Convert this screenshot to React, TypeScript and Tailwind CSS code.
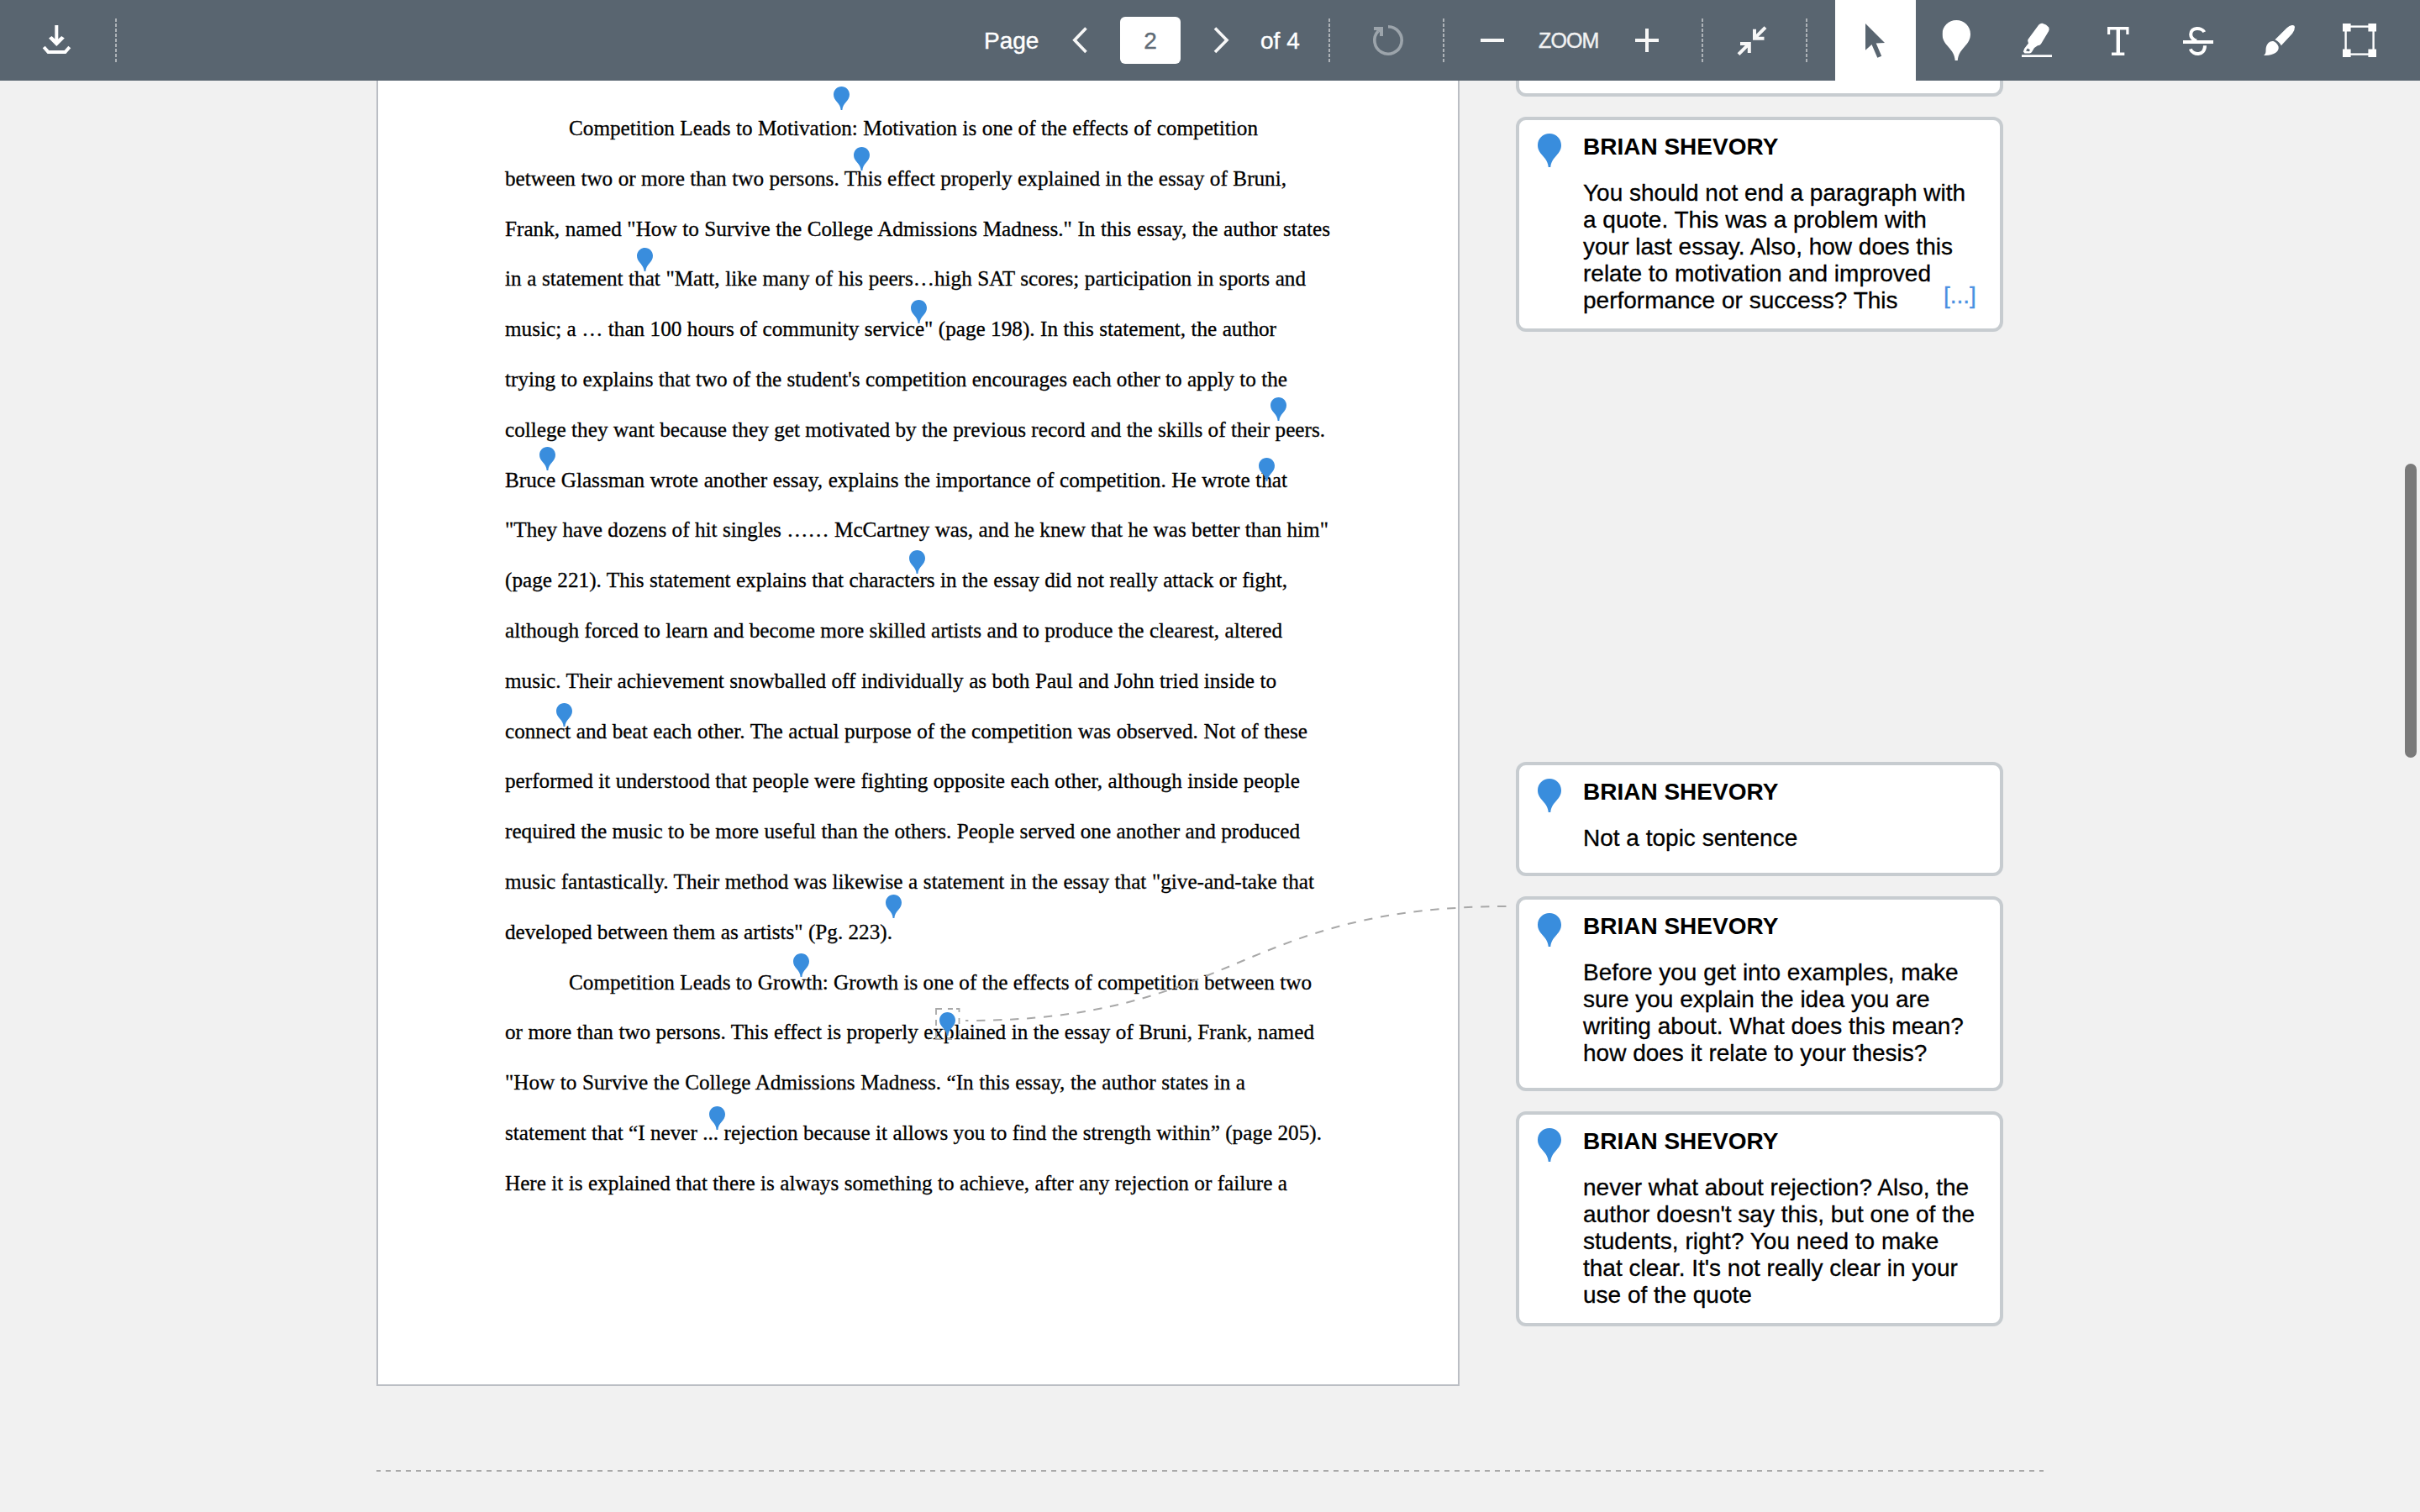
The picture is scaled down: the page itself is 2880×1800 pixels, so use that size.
import React from "react";

type Line = { text: string; width: string; indent?: boolean };

const LINES: Line[] = [
  { text: "Competition Leads to Motivation: Motivation is one of the effects of competition", width: "w-[820px]", indent: true },
  { text: "between two or more than two persons. This effect properly explained in the essay of Bruni,", width: "w-[930px]" },
  { text: "Frank, named \"How to Survive the College Admissions Madness.\" In this essay, the author states", width: "w-[982px]" },
  { text: "in a statement that \"Matt, like many of his peers…high SAT scores; participation in sports and", width: "w-[953px]" },
  { text: "music; a … than 100 hours of community service\" (page 198). In this statement, the author", width: "w-[918px]" },
  { text: "trying to explains that two of the student's competition encourages each other to apply to the", width: "w-[931px]" },
  { text: "college they want because they get motivated by the previous record and the skills of their peers.", width: "w-[976px]" },
  { text: "Bruce Glassman wrote another essay, explains the importance of competition. He wrote that", width: "w-[931px]" },
  { text: "\"They have dozens of hit singles …… McCartney was, and he knew that he was better than him\"", width: "w-[980px]" },
  { text: "(page 221). This statement explains that characters in the essay did not really attack or fight,", width: "w-[931px]" },
  { text: "although forced to learn and become more skilled artists and to produce the clearest, altered", width: "w-[925px]" },
  { text: "music. Their achievement snowballed off individually as both Paul and John tried inside to", width: "w-[918px]" },
  { text: "connect and beat each other. The actual purpose of the competition was observed. Not of these", width: "w-[955px]" },
  { text: "performed it understood that people were fighting opposite each other, although inside people", width: "w-[946px]" },
  { text: "required the music to be more useful than the others. People served one another and produced", width: "w-[946px]" },
  { text: "music fantastically. Their method was likewise a statement in the essay that \"give-and-take that", width: "w-[963px]" },
  { text: "developed between them as artists\" (Pg. 223).", width: "w-[461px]" },
  { text: "Competition Leads to Growth: Growth is one of the effects of competition between two", width: "w-[884px]", indent: true },
  { text: "or more than two persons. This effect is properly explained in the essay of Bruni, Frank, named", width: "w-[963px]" },
  { text: "\"How to Survive the College Admissions Madness. “In this essay, the author states in a", width: "w-[881px]" },
  { text: "statement that “I never ... rejection because it allows you to find the strength within” (page 205).", width: "w-[972px]" },
  { text: "Here it is explained that there is always something to achieve, after any rejection or failure a", width: "w-[931px]" },
];

/* Pins dropped on the sheet: centre x and top y, measured from the sheet's corner. */
const PINS: [number, number][] = [
  [553, 7],
  [577, 79],
  [319, 199],
  [645, 261],
  [1073, 377],
  [203, 436],
  [1059, 449],
  [643, 559],
  [223, 741],
  [615, 969],
  [505, 1039],
  [679.5, 1109],
  [405, 1221],
];

const PIN_PATH =
  "M14 0C21.7 0 28 6 28 13.7C28 19 25.6 22.5 22.2 26.2C18.2 30.6 15.6 34.5 15.3 40H12.7C12.4 34.5 9.8 30.6 5.8 26.2C2.4 22.5 0 19 0 13.7C0 6 6.3 0 14 0Z";

function Pin({ className, style }: { className: string; style?: React.CSSProperties }) {
  return (
    <svg viewBox="0 0 28 40" preserveAspectRatio="none" className={className} style={style}>
      <path d={PIN_PATH} fill="currentColor" />
    </svg>
  );
}

function Separator({ className }: { className: string }) {
  return (
    <div
      className={`h-[52px] w-[2px] shrink-0 bg-[repeating-linear-gradient(to_bottom,#adb2b7_0px,#adb2b7_4px,transparent_4px,transparent_6px)] ${className}`}
    />
  );
}

/* Toolbar glyphs share one coordinate space: x runs along the bar, y from its top. */
function Glyph({ x, w, className = "", children }: { x: number; w: number; className?: string; children: React.ReactNode }) {
  return (
    <svg viewBox={`${x} 0 ${w} 96`} width={w} height={96} fill="none" className={`shrink-0 ${className}`}>
      {children}
    </svg>
  );
}

function Toolbar() {
  return (
    <header className="flex h-24 w-full shrink-0 items-center bg-[#596570] text-[28px] leading-8 text-white [-webkit-text-stroke:0.4px]">
      <Glyph x={0} w={137}>
        <path d="M67.3 30V50" stroke="#fff" strokeWidth="4" />
        <path d="M61.5 43L65.5 46.5H69.2L73.2 43L76.8 45.6L67.3 55L58 45.6Z" fill="#fff" />
        <path d="M52.2 56L57.5 62H77.5L82.8 56" stroke="#fff" strokeWidth="4" />
      </Glyph>
      <Separator className="" />

      <span className="ml-[1032px] w-[66px] shrink-0 whitespace-nowrap pt-px">Page</span>
      <Glyph x={1276} w={20} className="ml-[39px]">
        <path d="M1292.5 33.5L1278.8 47.7L1292.5 62" stroke="#f7f7f7" strokeWidth="3.6" />
      </Glyph>
      <div className="ml-[37px] flex h-14 w-[72px] shrink-0 items-center justify-center rounded-md bg-white pt-px text-[#5f6b76]">2</div>
      <Glyph x={1444} w={20} className="ml-[39px]">
        <path d="M1446 33.5L1460 47.7L1446 62" stroke="#f7f7f7" strokeWidth="3.6" />
      </Glyph>
      <span className="ml-9 w-[49px] shrink-0 whitespace-nowrap pt-px">of 4</span>
      <Separator className="ml-8" />
      <Glyph x={1632} w={40} className="ml-[49px]">
        <path d="M1652 31.8A16.2 16.2 0 1 1 1640.2 36.9" stroke="#9ca4ab" strokeWidth="3.6" />
        <path d="M1635 32H1646V43H1642V38.5L1638 36H1635Z" fill="#9ca4ab" />
      </Glyph>
      <Separator className="ml-[45px]" />
      <Glyph x={1762} w={28} className="ml-[43px]">
        <path d="M1762 48H1790" stroke="#f7f7f7" strokeWidth="4" />
      </Glyph>
      <span className="ml-[41px] w-[73px] shrink-0 whitespace-nowrap text-[25px] tracking-[-0.035em] text-[#f2f2f2]">ZOOM</span>
      <Glyph x={1946} w={28} className="ml-[42px]">
        <path d="M1946 48H1974M1960 34V62" stroke="#f7f7f7" strokeWidth="4" />
      </Glyph>
      <Separator className="ml-[51px]" />
      <Glyph x={2066} w={38} className="ml-[39px]">
        <path d="M2101 32.7L2088 45.7M2088 34.7V45.7H2099.5" stroke="#f7f7f7" strokeWidth="4" />
        <path d="M2069 64.7L2082 51.7M2071 51.9H2081.8V63" stroke="#f7f7f7" strokeWidth="4" />
      </Glyph>
      <Separator className="ml-[45px]" />

      <Glyph x={2184} w={96} className="ml-[33px] bg-white">
        <path d="M2220 28L2243 51L2232.7 51.5L2239.2 66.7L2234.3 68.7L2227.5 53L2220 59.7Z" fill="#596570" />
      </Glyph>
      <Glyph x={2280} w={96}>
        <svg x="2311.5" y="24" width="33.5" height="48" viewBox="0 0 28 40">
          <path d={PIN_PATH} fill="#fff" />
        </svg>
      </Glyph>
      <Glyph x={2376} w={96}>
        <path
          fillRule="evenodd"
          fill="#fff"
          d="M2430.6 27.8Q2435.5 29 2438.2 32.5Q2439.2 34.5 2438 37.2L2429 52.2Q2427.8 54.2 2425 54.2L2421 57L2418 62Q2417 63.6 2415 63.4L2409.5 63.4L2407.8 61.5L2409.2 57.8L2414 51.5L2413.2 48.8Q2413 47.6 2413.8 46.4L2426.3 29.6Q2428.5 27.3 2430.6 27.8ZM2413 57.6L2411 60.6L2414.6 61.2L2416 59.4Z"
        />
        <path d="M2406 66.7H2442" stroke="#fff" strokeWidth="2.7" />
      </Glyph>
      <Glyph x={2472} w={96}>
        <path d="M2508 32H2533.5V41H2530.3V35.6H2523V62.4H2528.3V66H2513V62.4H2518.6V35.6H2511.2V41H2508Z" fill="#fff" />
      </Glyph>
      <Glyph x={2568} w={96}>
        <path d="M2598 50H2634" stroke="#fff" strokeWidth="4.2" />
        <path d="M2623.3 38.2C2620.5 32.6 2607.2 31.6 2607.2 41C2607.2 45 2609.5 47 2614 48.6" stroke="#fff" strokeWidth="4" />
        <path d="M2606.8 58.3C2609.5 66 2624 67 2624 54.3" stroke="#fff" strokeWidth="4" />
      </Glyph>
      <Glyph x={2664} w={96}>
        <path d="M2727.5 30Q2730.6 29.4 2731 32Q2731 36.5 2728 40L2714.8 54.2Q2712.5 49.5 2707.4 47.2L2721.5 33.2Q2724.6 30.5 2727.5 30Z" fill="#fff" />
        <path d="M2705.4 49Q2709.8 50.5 2711.6 55.6C2712.8 61.5 2706 66.6 2694 65.9C2697.6 63.4 2696 60 2696.8 56.4C2697.8 51.6 2701.5 48.4 2705.4 49Z" fill="#fff" />
      </Glyph>
      <Glyph x={2760} w={120}>
        <rect x="2791.6" y="31.6" width="33" height="33" stroke="#fff" strokeWidth="2.4" />
        <path d="M2788 28h9.6v9.6h-9.6zM2818.4 28h9.6v9.6h-9.6zM2788 58.4h9.6v9.6h-9.6zM2818.4 58.4h9.6v9.6h-9.6z" fill="#fff" />
      </Glyph>
    </header>
  );
}

function Sheet() {
  return (
    <article className="relative h-[1554px] w-[1289px] shrink-0 border-x-2 border-b-2 border-[#bbbec4] bg-white pl-[151px] pt-[27px]">
      <div className="font-['Liberation_Serif',serif] text-[25.2px] leading-[59.8px] text-black [-webkit-text-stroke:0.3px]">
        {LINES.map((l) => (
          <p
            key={l.text}
            className={`h-[59.8px] whitespace-nowrap [text-align-last:justify] ${l.width} ${l.indent ? "ml-[76px]" : ""}`}
          >
            {l.text}
          </p>
        ))}
      </div>

      {PINS.map(([x, y]) => (
        <Pin
          key={`${x}-${y}`}
          className="absolute h-7 w-[19px] text-[#398ddd]"
          style={{ left: x - 11.5, top: y }}
        />
      ))}

      {/* selected pin outline and the connector that runs to its comment card */}
      <svg
        className="pointer-events-none absolute left-[-2px] top-0 overflow-visible"
        width="1356"
        height="1554"
        viewBox="448 96 1356 1554"
        fill="none"
        stroke="#a8a8a8"
        strokeWidth="2"
      >
        <path d="M1114 1208V1201H1121M1128 1201H1134M1138 1201H1141.5V1205M1114 1214V1221M1141.5 1212V1219M1114 1228V1237H1120M1127 1237H1133M1141.5 1226V1233" strokeWidth="1.8" />
        <path d="M1149 1215C1471 1215 1471 1079 1796 1079" strokeDasharray="10.3 9.7" strokeDashoffset="7" />
      </svg>
    </article>
  );
}

function Comment({ lines, className, pad, more }: { lines: string[]; className: string; pad: string; more?: boolean }) {
  return (
    <section className={`relative flex w-[580px] rounded-xl border-4 border-[#c7ccd0] bg-white pl-[21.5px] pt-4 text-[28px] leading-8 text-black ${pad} ${className}`}>
      <Pin className="h-10 w-7 shrink-0 text-[#398ddd]" />
      <div className="ml-[26.5px] whitespace-nowrap">
        <h3 className="font-bold">BRIAN SHEVORY</h3>
        <div className="mt-[23px] [-webkit-text-stroke:0.3px]">
          {lines.map((l) => (
            <p key={l}>{l}</p>
          ))}
        </div>
      </div>
      {more && <span className="absolute left-[505px] top-[193px] text-[#4a90e2] [-webkit-text-stroke:0.3px]">[...]</span>}
    </section>
  );
}

export default function App() {
  return (
    <div className="relative flex h-[1800px] w-[2880px] flex-col overflow-hidden bg-[#f1f1f1] font-['Liberation_Sans',Arial,sans-serif]">
      <Toolbar />
      <main className="flex pl-[448px]">
        <Sheet />
        <aside className="ml-[67px] flex h-[1554px] flex-col">
          <div className="h-[19px] w-[580px] shrink-0 rounded-b-xl border-4 border-t-0 border-[#c7ccd0] bg-white" />
          <Comment
            className="mt-6"
            pad="pb-[17px]"
            more
            lines={[
              "You should not end a paragraph with",
              "a quote. This was a problem with",
              "your last essay. Also, how does this",
              "relate to motivation and improved",
              "performance or success? This",
            ]}
          />
          <Comment className="mt-[512px]" pad="pb-[25px]" lines={["Not a topic sentence"]} />
          <Comment
            className="mt-6"
            pad="pb-[25px]"
            lines={[
              "Before you get into examples, make",
              "sure you explain the idea you are",
              "writing about. What does this mean?",
              "how does it relate to your thesis?",
            ]}
          />
          <Comment
            className="mt-6"
            pad="pb-[17px]"
            lines={[
              "never what about rejection? Also, the",
              "author doesn't say this, but one of the",
              "students, right? You need to make",
              "that clear. It's not really clear in your",
              "use of the quote",
            ]}
          />
        </aside>
      </main>
      <div className="ml-[448px] mt-[100px] h-[2px] w-[1984px] shrink-0 bg-[repeating-linear-gradient(to_right,#a9a9a9_0px,#a9a9a9_5px,transparent_5px,transparent_11px,#a9a9a9_11px,#a9a9a9_12px)]" />
      <div className="absolute right-1 top-[552px] h-[350px] w-[14px] rounded-full bg-[#7a7a7a]" />
    </div>
  );
}
